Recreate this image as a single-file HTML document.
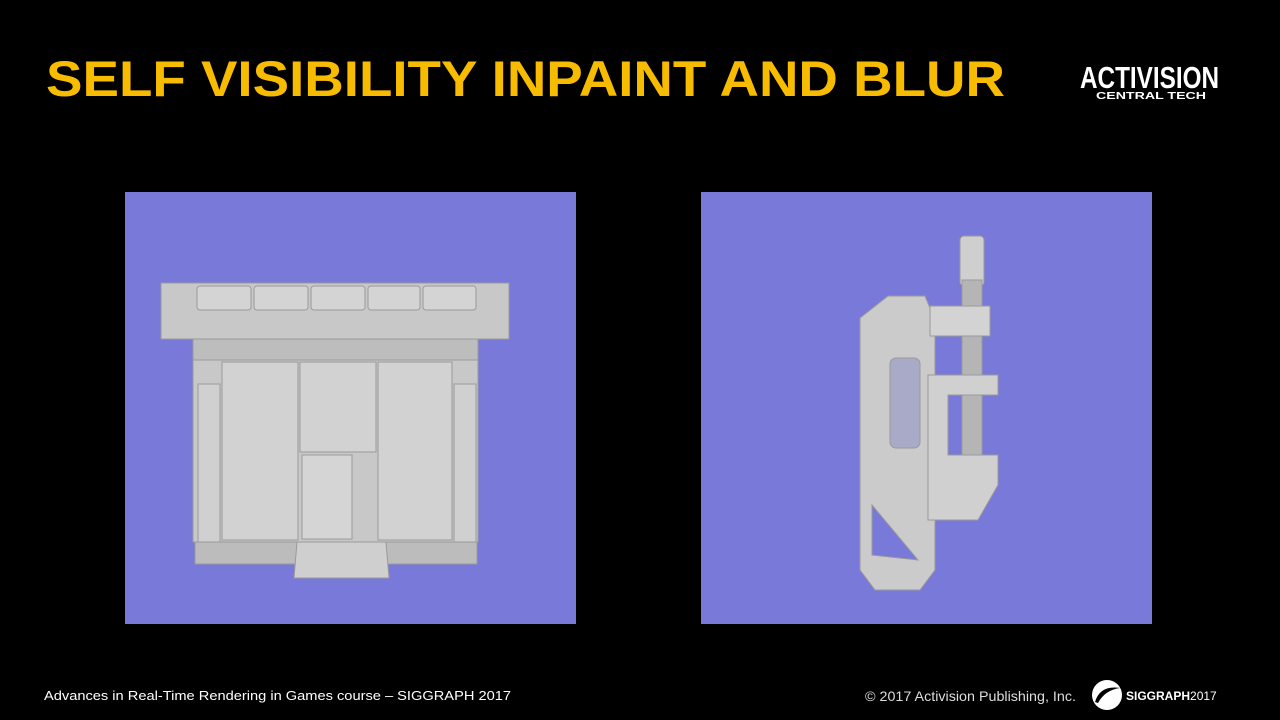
<!DOCTYPE html>
<html><head><meta charset="utf-8"><style>
html,body{margin:0;padding:0;background:#000;width:1280px;height:720px;overflow:hidden;font-family:"Liberation Sans",sans-serif}
.p{position:absolute;top:192px;width:451px;height:432px;background:#7879d8}
</style></head><body>
<svg width="1280" height="720" style="position:absolute;left:0;top:0">
<text x="46" y="96" fill="#f7bb00" font-family="Liberation Sans" font-weight="bold" font-size="50" textLength="959" lengthAdjust="spacingAndGlyphs">SELF VISIBILITY INPAINT AND BLUR</text>
<text x="1080" y="88" fill="#fff" font-family="Liberation Sans" font-weight="bold" font-size="31" textLength="139" lengthAdjust="spacingAndGlyphs">ACTIVISION</text>
<text x="1096" y="99" fill="#fff" font-family="Liberation Sans" font-weight="bold" font-size="10" textLength="110" lengthAdjust="spacingAndGlyphs">CENTRAL TECH</text>
<text x="44" y="700" fill="#fff" font-size="13" textLength="467" lengthAdjust="spacingAndGlyphs">Advances in Real-Time Rendering in Games course – SIGGRAPH 2017</text>
<text x="865" y="701" fill="#ddd" font-size="14" textLength="211" lengthAdjust="spacingAndGlyphs">© 2017 Activision Publishing, Inc.</text>
<circle cx="1107" cy="695" r="15" fill="#fff"/>
<path d="M1095 702 Q1100 685 1120 688 Q1105 690 1098 703Z" fill="#000"/>
<text x="1126" y="700" fill="#fff" font-weight="bold" font-size="12">SIGGRAPH<tspan font-weight="normal">2017</tspan></text>
</svg>
<div class="p" style="left:125px"></div>
<div class="p" style="left:701px"></div>
<svg width="1280" height="720" style="position:absolute;left:0;top:0">
<g fill="#c8c8c8" stroke="#9a9a9a" stroke-width="1">
<rect x="161" y="283" width="348" height="56"/>
<rect x="197" y="286" width="54" height="24" rx="3" fill="#d4d4d4"/>
<rect x="254" y="286" width="54" height="24" rx="3" fill="#d4d4d4"/>
<rect x="311" y="286" width="54" height="24" rx="3" fill="#d4d4d4"/>
<rect x="368" y="286" width="52" height="24" rx="3" fill="#d4d4d4"/>
<rect x="423" y="286" width="53" height="24" rx="3" fill="#d4d4d4"/>
<rect x="193" y="339" width="285" height="28" fill="#bdbdbd"/>
<rect x="193" y="360" width="285" height="182"/>
<rect x="198" y="384" width="22" height="160" fill="#d0d0d0"/>
<rect x="454" y="384" width="22" height="160" fill="#d0d0d0"/>
<rect x="222" y="362" width="76" height="178" fill="#d2d2d2"/>
<rect x="300" y="362" width="76" height="90" fill="#d2d2d2"/>
<rect x="378" y="362" width="74" height="178" fill="#d2d2d2"/>
<rect x="302" y="455" width="50" height="84" fill="#d5d5d5"/>
<rect x="195" y="542" width="282" height="22" fill="#bcbcbc"/>
<polygon points="297,542 386,542 389,578 294,578" fill="#cfcfcf"/>
</g>
<g fill="#c8c8c8" stroke="#9a9a9a" stroke-width="1">
<rect x="960" y="236" width="24" height="50" rx="4" fill="#cfcfcf"/>
<rect x="962" y="280" width="20" height="200" fill="#b5b5b5"/>
<polygon points="860,318 888,296 925,296 935,320 935,570 920,590 875,590 860,570" fill="#cbcbcb"/>
<rect x="890" y="358" width="30" height="90" rx="6" fill="#a9a9c8"/>
<polygon points="872,505 918,560 872,555" fill="#7879d8"/>
<path d="M928 375 h70 v20 h-50 v60 h50 v30 l-20 35 h-50Z" fill="#d0d0d0"/>
<rect x="930" y="306" width="60" height="30" fill="#d3d3d3"/>
</g>
</svg>
</body></html>
